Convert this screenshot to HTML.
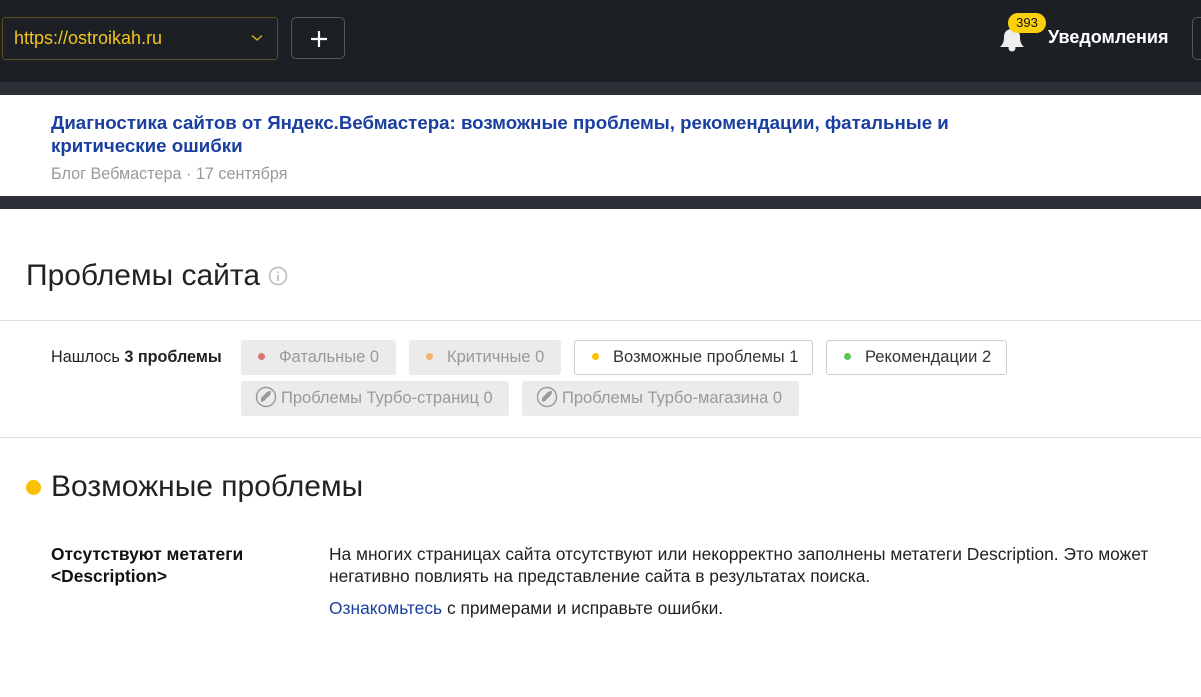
<!DOCTYPE html>
<html><head><meta charset="utf-8"><style>
*{margin:0;padding:0;box-sizing:border-box}
body{width:1201px;height:697px;overflow:hidden;background:#fff;font-family:"Liberation Sans",Arial,sans-serif;position:relative}
.hdr{position:absolute;left:0;top:0;width:1201px;height:82px;background:#1c1f24}
.band{position:absolute;left:0;width:1201px;background:#2d3036}
.sel{position:absolute;left:2px;top:17px;width:276px;height:43px;border:1px solid #5a4f22;border-radius:3px;color:#f2c31e;font-size:18px;line-height:41px;padding-left:11px}
.sel svg{position:absolute;right:14px;top:16px}
.plus{position:absolute;left:291px;top:17px;width:54px;height:42px;border:1px solid #54585f;border-radius:5px}
.abs{position:absolute}
.chip{position:absolute;height:35px;border-radius:3px;background:#ebebeb;color:#999;font-size:16.5px;line-height:35px;padding-left:17px}
.chip.w{background:#fff;border:1px solid #ccc;color:#333;line-height:33px}
.dot{display:inline-block;width:7px;height:7px;border-radius:50%;margin-right:14px;vertical-align:2px}
</style></head><body>
<div class="hdr"></div>
<div class="sel">https://ostroikah.ru<svg width="12" height="8" viewBox="0 0 12 8"><path d="M1 1.5l5 4.5 5-4.5" stroke="#e4b51d" stroke-width="1.3" fill="none"/></svg></div>
<div class="plus"><svg width="54" height="42"><path d="M27 13v16M19 21h16" stroke="#fff" stroke-width="2.2"/></svg></div>
<svg class="abs" style="left:996px;top:24px" width="32" height="28" viewBox="0 0 32 28"><path d="M4 23c2-2 4-4 4-10 0-5 3-8 8-8s8 3 8 8c0 6 2 8 4 10z" fill="#eee"/><circle cx="16" cy="24" r="3.5" fill="#eee"/></svg>
<div class="abs" style="left:1008px;top:13px;width:38px;height:20px;border-radius:10px;background:#fcd00b;color:#111;font-size:13px;line-height:20px;text-align:center">393</div>
<div class="abs" style="left:1048px;top:27px;color:#fff;font-size:18px;font-weight:bold">Уведомления</div>
<div class="abs" style="left:1192px;top:17px;width:20px;height:43px;border:1px solid #54585f;border-radius:5px"></div>
<div class="band" style="top:82px;height:13px"></div>
<div class="band" style="top:196px;height:13px"></div>
<div class="abs" style="left:51px;top:111px;width:940px;color:#1a3fa0;font-size:18.7px;font-weight:bold;line-height:23px">Диагностика сайтов от Яндекс.Вебмастера: возможные проблемы, рекомендации, фатальные и критические ошибки</div>
<div class="abs" style="left:51px;top:165px;color:#999;font-size:16.2px">Блог Вебмастера · 17 сентября</div>
<div class="abs" style="left:26px;top:259px;font-size:30px;color:#222">Проблемы сайта <svg width="20" height="20" style="vertical-align:-1px" viewBox="0 0 20 20"><circle cx="10" cy="10" r="8.5" stroke="#bbb" stroke-width="1.6" fill="none"/><path d="M10 9v6M10 5.5v1.5" stroke="#bbb" stroke-width="1.8"/></svg></div>
<div class="abs" style="left:0;top:320px;width:1201px;height:1px;background:#ddd"></div>
<div class="abs" style="left:51px;top:348px;font-size:16.2px;color:#222">Нашлось <b>3 проблемы</b></div>
<div class="chip" style="left:241px;top:340px;width:155px"><span class="dot" style="background:#de7474"></span>Фатальные 0</div>
<div class="chip" style="left:409px;top:340px;width:152px"><span class="dot" style="background:#f0b46e"></span>Критичные 0</div>
<div class="chip w" style="left:574px;top:340px;width:239px"><span class="dot" style="background:#fcc000"></span>Возможные проблемы 1</div>
<div class="chip w" style="left:826px;top:340px;width:181px"><span class="dot" style="background:#5cc25c"></span>Рекомендации 2</div>
<div class="chip" style="left:241px;top:381px;width:268px;padding-left:14px"><svg width="22" height="22" viewBox="0 0 22 22" style="vertical-align:-5px;margin-right:4px"><circle cx="11" cy="11" r="9.5" stroke="#999" stroke-width="1.4" fill="none"/><path d="M6 16l3-1 6-6c1-2 1-4 1-4s-2 0-4 1l-6 6z" fill="#999"/></svg>Проблемы Турбо-страниц 0</div>
<div class="chip" style="left:522px;top:381px;width:277px;padding-left:14px"><svg width="22" height="22" viewBox="0 0 22 22" style="vertical-align:-5px;margin-right:4px"><circle cx="11" cy="11" r="9.5" stroke="#999" stroke-width="1.4" fill="none"/><path d="M6 16l3-1 6-6c1-2 1-4 1-4s-2 0-4 1l-6 6z" fill="#999"/></svg>Проблемы Турбо-магазина 0</div>
<div class="abs" style="left:0;top:437px;width:1201px;height:1px;background:#ddd"></div>
<div class="abs" style="left:26px;top:480px;width:15px;height:15px;border-radius:50%;background:#fcc000"></div>
<div class="abs" style="left:51px;top:470px;font-size:30px;color:#222">Возможные проблемы</div>
<div class="abs" style="left:51px;top:543px;font-size:17.4px;font-weight:bold;color:#111;line-height:22px">Отсутствуют метатеги<br>&lt;Description&gt;</div>
<div class="abs" style="left:329px;top:543px;width:840px;font-size:17.4px;color:#222;line-height:22px">На многих страницах сайта отсутствуют или некорректно заполнены метатеги Description. Это может негативно повлиять на представление сайта в результатах поиска.</div>
<div class="abs" style="left:329px;top:598px;font-size:17.4px;color:#222"><span style="color:#1a3fa0">Ознакомьтесь</span> с примерами и исправьте ошибки.</div>
</body></html>
